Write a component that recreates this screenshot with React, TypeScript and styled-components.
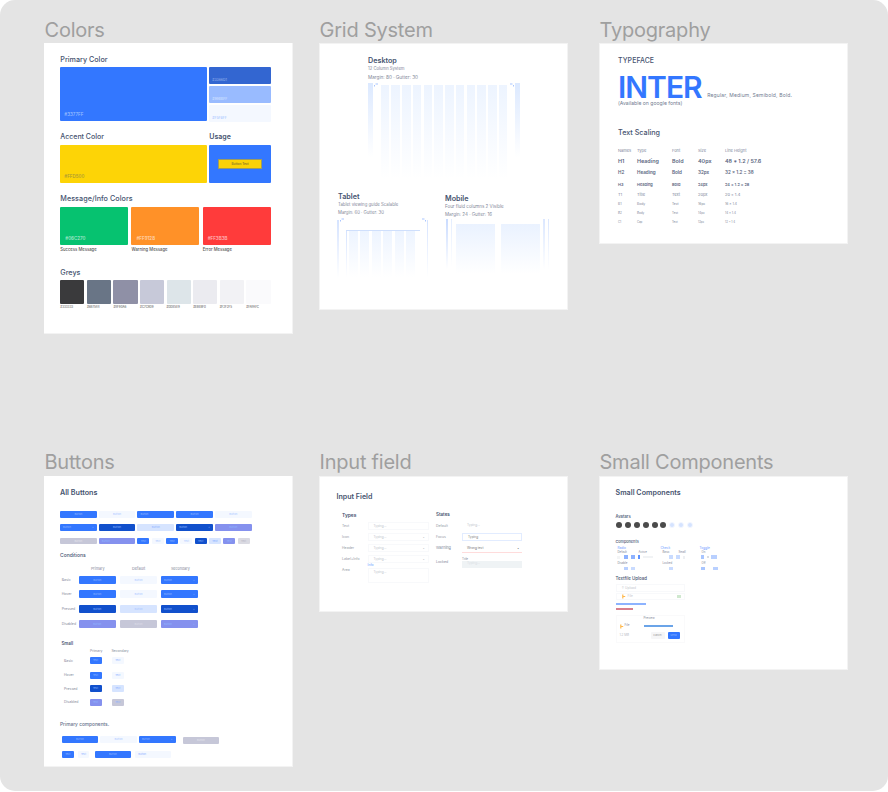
import React from "react";
import styled, { createGlobalStyle } from "styled-components";

const Global = createGlobalStyle`
  * { box-sizing: border-box; }
  html, body { margin: 0; background: #fff; }
  body { font-family: Inter, "Liberation Sans", sans-serif; }
`;

const ink = "#46536f";
const mute = "#7f8798";
const blue = "#3377ff";
const navy = "#1150cc";
const pale = "#f4f8ff";
const sky = "#d6e4ff";
const violet = "#8591ee";
const grey = "#c6c7d8";

const Canvas = styled.main`
  width: 888px;
  height: 791px;
  padding-left: 44px;
  border-radius: 15px;
  background: #e4e4e4;
  display: grid;
  grid-template-columns: 275px 280px 249px;
  grid-template-rows: 433px 358px;
  overflow: hidden;
`;

const Frame = styled.section`
  display: flex;
  flex-direction: column;
  align-items: flex-start;
`;

const FrameTitle = styled.h2<{ $pt?: number }>`
  margin: 0;
  height: 43px;
  padding: ${(p) => p.$pt ?? 17}px 0 0 0.5px;
  font-size: 20px;
  line-height: 26px;
  font-weight: 400;
  letter-spacing: -0.22px;
  color: #9f9f9f;
  white-space: nowrap;
`;

const Board = styled.div<{ $h: number; $pl: number; $flush?: boolean }>`
  width: 249px;
  height: ${(p) => p.$h}px;
  padding-left: ${(p) => p.$pl}px;
  background: #fff;
  box-shadow: inset ${(p) => (p.$flush ? "-1px -1px" : "0 0")} 0
    ${(p) => (p.$flush ? "0" : "1px")} #f3f3f3;
  display: flex;
  flex-direction: column;
  align-items: flex-start;
`;

const Text = styled.div<{
  $s?: number;
  $h?: number;
  $mt?: number;
  $c?: string;
  $w?: number;
  $ls?: number;
  $ml?: number;
}>`
  font-size: ${(p) => p.$s ?? 4}px;
  line-height: ${(p) => p.$h ?? 8}px;
  height: ${(p) => p.$h ?? 8}px;
  margin-top: ${(p) => p.$mt ?? 0}px;
  margin-left: ${(p) => p.$ml ?? 0}px;
  color: ${(p) => p.$c ?? mute};
  font-weight: ${(p) => p.$w ?? 400};
  letter-spacing: ${(p) => p.$ls ?? 0}px;
  white-space: nowrap;
`;

const Heading = styled(Text)`
  color: ${(p) => p.$c ?? ink};
  font-weight: ${(p) => p.$w ?? 600};
`;

const Row = styled.div<{ $gap?: number; $mt?: number; $ml?: number; $h?: number; $align?: string }>`
  display: flex;
  flex: none;
  gap: ${(p) => p.$gap ?? 0}px;
  margin-top: ${(p) => p.$mt ?? 0}px;
  margin-left: ${(p) => p.$ml ?? 0}px;
  height: ${(p) => (p.$h ? `${p.$h}px` : "auto")};
  align-items: ${(p) => p.$align ?? "flex-start"};
`;

const Col = styled.div<{ $gap?: number; $w?: number; $pt?: number }>`
  display: flex;
  flex: none;
  flex-direction: column;
  gap: ${(p) => p.$gap ?? 0}px;
  width: ${(p) => (p.$w ? `${p.$w}px` : "auto")};
  padding-top: ${(p) => p.$pt ?? 0}px;
`;

const TableRow = styled.div<{ $cols: string; $h: number; $mt?: number; $ml?: number }>`
  display: grid;
  flex: none;
  grid-template-columns: ${(p) => p.$cols};
  height: ${(p) => p.$h}px;
  margin-top: ${(p) => p.$mt ?? 0}px;
  margin-left: ${(p) => p.$ml ?? 0}px;
  align-items: center;
`;

const Swatch = styled.div<{ $w: number; $h: number; $bg: string; $c?: string; $pl?: number; $pb?: number }>`
  width: ${(p) => p.$w}px;
  height: ${(p) => p.$h}px;
  flex: none;
  border-radius: 1px;
  background: ${(p) => p.$bg};
  color: ${(p) => p.$c ?? "#ffffff99"};
  padding: 0 0 ${(p) => p.$pb ?? 4}px ${(p) => p.$pl ?? 4}px;
  display: flex;
  align-items: flex-end;
  font-size: ${(p) => (p.$pb ? 3.4 : 4.5)}px;
  font-weight: 500;
  line-height: 5px;
`;

const UsagePanel = styled.div`
  width: 61.5px;
  height: 38.5px;
  border-radius: 1px;
  background: ${blue};
  display: grid;
  place-items: center;
`;

const UsageButton = styled.div`
  width: 44px;
  height: 10.5px;
  border: 0.5px solid #9c9b60;
  background: #fbd208;
  color: #77682c;
  font-size: 3.2px;
  font-weight: 500;
  line-height: 8.5px;
  text-align: center;
`;

const Button = styled.div<{ $w?: number; $h?: number; $bg: string; $c?: string; $split?: boolean }>`
  width: ${(p) => p.$w ?? 36.7}px;
  height: ${(p) => p.$h ?? 7}px;
  flex: none;
  border-radius: 1px;
  background: ${(p) => p.$bg};
  color: ${(p) => p.$c ?? "#8fb6ff"};
  font-size: 2.6px;
  line-height: ${(p) => p.$h ?? 7}px;
  padding: 0 ${(p) => (p.$split ? 3 : 0)}px;
  display: flex;
  justify-content: ${(p) => (p.$split ? "space-between" : "center")};
  white-space: nowrap;
  overflow: hidden;
`;

const Fade = styled.div<{ $w: number; $h: number; $c?: string; $mt?: number }>`
  width: ${(p) => p.$w}px;
  height: ${(p) => p.$h}px;
  flex: none;
  margin-top: ${(p) => p.$mt ?? 0}px;
  background: linear-gradient(${(p) => p.$c ?? "#edf4ff"}, #ffffff);
`;

const TabletTop = styled.div`
  width: 74px;
  margin-top: 12px;
  border-top: 1px solid #cfdffc;
  display: flex;
  gap: 2.4px;
`;

const Field = styled.div<{ $w?: number; $h?: number; $line?: string; $bg?: string; $c?: string; $bare?: boolean }>`
  width: ${(p) => p.$w ?? 61}px;
  height: ${(p) => p.$h ?? 8}px;
  flex: none;
  border: ${(p) => (p.$bare ? 0 : 1)}px solid ${(p) => p.$line ?? "#f8f9fb"};
  background: ${(p) => p.$bg ?? "#fff"};
  color: ${(p) => p.$c ?? "#c3c7ce"};
  padding: 0 3px 0 5px;
  font-size: 3.2px;
  line-height: ${(p) => Math.min(p.$h ?? 8, 8) - 2}px;
  display: flex;
  justify-content: space-between;
`;

const ErrorField = styled(Field)`
  border: 0;
  border-bottom: 1.5px solid #ffdcdc;
`;

const Bar = styled.div<{ $w: number; $h: number; $bg: string; $mt?: number; $ml?: number }>`
  width: ${(p) => p.$w}px;
  height: ${(p) => p.$h}px;
  flex: none;
  margin-top: ${(p) => p.$mt ?? 0}px;
  margin-left: ${(p) => p.$ml ?? 0}px;
  background: ${(p) => p.$bg};
`;

const Avatar = styled.div<{ $light?: boolean }>`
  width: 6px;
  height: 6px;
  border-radius: 50%;
  background: ${(p) => (p.$light ? "#d5e3ff" : "#4b4b4b")};
  border: ${(p) => (p.$light ? "1.5px solid #f3f7ff" : "0")};
`;

const UploadCard = styled.div`
  width: 69px;
  height: 28px;
  flex: none;
  margin-top: 4.5px;
  border: 1px solid #fafafb;
  display: grid;
  grid-template-columns: 27px 1fr;
`;

const Corner = ({ flip }: { flip?: boolean }) => (
  <svg width="7" height="4" viewBox="0 0 7 4" fill="none">
    <path
      d={flip ? "M2 1h2.5M5.5 2v1.5" : "M5 1H2.5M1.5 2V3.5"}
      stroke="#a9c5ff"
      strokeWidth="1"
    />
  </svg>
);

const Flame = () => (
  <svg width="4" height="5" viewBox="0 0 4 5">
    <path d="M.8 .5v4M.8 2.5h2.4" stroke="#ffb84d" strokeWidth="1.2" fill="none" />
  </svg>
);

const GREYS: [string, string][] = [
  ["#3a3a3c", "#333333"],
  ["#697586", "#6B7588"],
  ["#8f90a6", "#8F90A6"],
  ["#c7c9d9", "#C7C9D9"],
  ["#dde5e9", "#DDE5E9"],
  ["#ebebf0", "#EBEBF0"],
  ["#f2f2f5", "#F2F2F5"],
  ["#fafafc", "#FAFAFC"],
];

const MESSAGES: [string, string, string][] = [
  ["#06c270", "#06C270", "Success Message"],
  ["#ff9128", "#FF9128", "Warning Message"],
  ["#ff3b3b", "#FF3B3B", "Error Message"],
];

const ColorsBoard = () => (
  <Board $h={291} $pl={16.3} $flush>
    <Heading $s={7.2} $mt={12.5} $w={500}>Primary Color</Heading>
    <Row $gap={2.5} $mt={3.5}>
      <Swatch $w={146.5} $h={54} $bg={blue} $c="#9fc0ff" $pl={4}>#3377FF</Swatch>
      <Col $gap={2}>
        <Swatch $w={61.5} $h={17} $bg="#3366d1" $c="#8fadea" $pl={3} $pb={1.5}>#3366D1</Swatch>
        <Swatch $w={61.5} $h={17} $bg="#99bbff" $c="#d3e2ff" $pl={3} $pb={1.5}>#99BBFF</Swatch>
        <Swatch $w={61.5} $h={17} $bg={pale} $c="#a9c6ff" $pl={3} $pb={1.5}>#F5F8FF</Swatch>
      </Col>
    </Row>
    <Row $mt={11}>
      <Col $w={149}><Heading $s={7} $w={500}>Accent Color</Heading></Col>
      <Heading $s={7}>Usage</Heading>
    </Row>
    <Row $gap={2.5} $mt={3.5}>
      <Swatch $w={146.5} $h={38.5} $bg="#fdd406" $c="#a89738">#FFD500</Swatch>
      <UsagePanel><UsageButton>Button Text</UsageButton></UsagePanel>
    </Row>
    <Heading $s={7.2} $mt={12} $w={500} $ls={0.05}>Message/Info Colors</Heading>
    <Row $gap={3.3} $mt={3.5}>
      {MESSAGES.map(([bg, hex, name]) => (
        <Col key={hex} $w={67.9}>
          <Swatch $w={67.9} $h={38.5} $bg={bg} $c="#ffffffaa" $pl={5}>{hex}</Swatch>
          <Text $s={4.2} $h={9.5} $w={500} $c="#555">{name}</Text>
        </Col>
      ))}
    </Row>
    <Heading $s={7.2} $mt={14} $w={500}>Greys</Heading>
    <Row $gap={2.4} $mt={3.5}>
      {GREYS.map(([bg, hex]) => (
        <Col key={hex} $w={24.2}>
          <Swatch $w={24.2} $h={24} $bg={bg} />
          <Text $s={2.9} $h={7} $w={500} $c="#666">{hex}</Text>
        </Col>
      ))}
    </Row>
  </Board>
);

const GridBoard = () => (
  <Board $h={267} $pl={18}>
    <Col $pt={14}>
      <Heading $s={7.2} $ml={31}>Desktop</Heading>
      <Text $s={4.2} $ml={31}>12 Column System</Text>
      <Text $s={4.7} $ml={31}>Margin: 80 · Gutter: 30</Text>
    </Col>
    <Row $mt={2} $ml={31} $gap={0.5} $h={110}>
      <Fade $w={4.7} $h={74} $c="#dce9ff" />
      <Corner />
      <Row $gap={2.25} $mt={2}>
        {Array.from({ length: 12 }, (_, i) => <Fade key={i} $w={8.5} $h={94} />)}
      </Row>
      <Corner flip />
      <Fade $w={4.7} $h={74} $c="#dce9ff" />
    </Row>
    <Row>
      <Col $w={108}>
        <Heading $s={7.2} $h={8} $ml={1}>Tablet</Heading>
        <Text $s={4.3} $ml={1}>Tablet viewing guide Scalable</Text>
        <Text $s={4.3} $ml={1}>Margin: 60 · Gutter: 30</Text>
        <Row $mt={1}>
          <Fade $w={1.5} $h={58} $c="#d5e3ff" $mt={2} />
          <Corner />
          <TabletTop>
            <Fade $w={1.2} $h={46} $c="#d5e3ff" />
            {Array.from({ length: 6 }, (_, i) => <Fade key={i} $w={9} $h={46} />)}
          </TabletTop>
          <Corner flip />
          <Fade $w={1.5} $h={58} $c="#d5e3ff" $mt={2} />
        </Row>
      </Col>
      <Col $pt={2}>
        <Heading $s={7.2} $h={8}>Mobile</Heading>
        <Text $s={4.5}>Four fluid columns 2 Visible</Text>
        <Text $s={4.5}>Margin: 24 · Gutter: 16</Text>
        <Row $h={54} $gap={3} $ml={1}>
          <Fade $w={1.5} $h={50} $c="#c9dbff" />
          <Fade $w={1.5} $h={48} $c="#e3edff" />
          <Row $gap={6} $ml={1}>
            <Fade $w={39} $h={50} $mt={5} $c="#eaf2ff" />
            <Fade $w={39} $h={50} $mt={5} $c="#eaf2ff" />
          </Row>
          <Fade $w={1.5} $h={50} $c="#dbe7ff" />
          <Fade $w={1.5} $h={50} $c="#dbe7ff" />
        </Row>
      </Col>
    </Row>
  </Board>
);

const TYPE_ROWS: { h: number; s: number; w: number; cells: string[] }[] = [
  { h: 9, s: 4, w: 400, cells: ["Names", "Type", "Font", "Size", "Line Height"] },
  { h: 11, s: 5.4, w: 600, cells: ["H1", "Heading", "Bold", "40px", "48 * 1.2 / 57.6"] },
  { h: 13, s: 4.6, w: 600, cells: ["H2", "Heading", "Bold", "32px", "32 x 1.2 = 38"] },
  { h: 10, s: 3.9, w: 600, cells: ["H3", "Heading", "Bold", "24px", "24 x 1.2 = 28"] },
  { h: 10, s: 4, w: 400, cells: ["T1", "Title", "Text", "20px", "20 x 1.4"] },
  { h: 9, s: 3.3, w: 400, cells: ["B1", "Body", "Text", "16px", "16 x 1.4"] },
  { h: 9, s: 3, w: 400, cells: ["B2", "Body", "Text", "14px", "14 x 1.4"] },
  { h: 9, s: 2.8, w: 400, cells: ["C1", "Cap", "Text", "12px", "12 x 1.4"] },
];

const TypographyBoard = () => (
  <Board $h={201} $pl={19}>
    <Heading $s={6.9} $mt={13.5} $w={500} $ls={0.1}>TYPEFACE</Heading>
    <Row $mt={9} $gap={5.5} $h={27} $align="center">
      <Heading $s={30} $h={27} $c={blue} $ls={-1}>INTER</Heading>
      <Text $s={5} $h={8} $mt={16} $c="#717b90" $ls={0.18}>Regular, Medium, Semibold, Bold.</Text>
    </Row>
    <Text $s={5.1} $h={5} $c="#717b90">(Available on google fonts)</Text>
    <Heading $s={7.2} $mt={23.5} $w={500}>Text Scaling</Heading>
    <Col $pt={9.5}>
      {TYPE_ROWS.map((r, i) => (
        <TableRow key={i} $cols="19px 35px 26px 27px auto" $h={r.h}>
          {r.cells.map((c, j) => (
            <Text key={j} $s={r.s} $w={r.w} $c={r.w > 400 ? "#5b6680" : "#7d8699"}>{c}</Text>
          ))}
        </TableRow>
      ))}
    </Col>
  </Board>
);

const MINI: [string, string?][] = [
  [blue], [pale, "#a9c6ff"], [blue], [pale, "#a9c6ff"],
  [navy], [sky, "#7ea9ff"], [violet], ["#dadae2", "#b5b5c2"],
];

const STATES: [string, string, string, string][] = [
  ["Basic", blue, pale, blue],
  ["Hover", blue, pale, blue],
  ["Pressed", navy, sky, navy],
  ["Disabled", violet, grey, violet],
];

const SMALL_ROWS: [string, string, string, number][] = [
  ["Basic", blue, pale, 14],
  ["Hover", blue, pale, 14.5],
  ["Pressed", navy, sky, 13],
  ["Disabled", violet, grey, 14],
];

const ButtonsBoard = () => (
  <Board $h={291} $pl={16} $flush>
    <Heading $s={7.2} $mt={12.5}>All Buttons</Heading>
    <Row $mt={14.5} $gap={2.05}>
      <Button $bg={blue}>Button</Button>
      <Button $bg={pale} $c="#a9c6ff">Button</Button>
      <Button $bg={blue} $split>Button</Button>
      <Button $bg={blue}>Button</Button>
      <Button $bg={pale} $c="#a9c6ff">Button</Button>
    </Row>
    <Row $mt={6} $gap={2.05}>
      <Button $bg={blue} $split><span>Button</span><span>+</span></Button>
      <Button $bg={navy}>Button</Button>
      <Button $bg={sky} $c="#8eb2ff">Button</Button>
      <Button $bg={navy} $split><span>Button</span><span>+</span></Button>
      <Button $bg={violet}>Button</Button>
    </Row>
    <Row $mt={6.5} $gap={2.05}>
      <Button $bg={grey} $c="#e4e4ed" $h={6.5}>Button</Button>
      <Button $bg={violet} $split $h={6.5}>Button</Button>
      <Row $gap={2.3}>
        {MINI.map(([bg, c], i) => <Button key={i} $w={12} $h={6.5} $bg={bg} $c={c}>Text</Button>)}
      </Row>
    </Row>
    <Heading $s={5} $mt={6.5} $w={500}>Conditions</Heading>
    <TableRow $cols="18px 41px 41px 37px" $h={8} $mt={6} $ml={1}>
      <span />
      <Text $s={3.7} $ml={12}>Primary</Text>
      <Text $s={3.9} $ml={12}>Default</Text>
      <Text $s={3.7} $ml={10}>Secondary</Text>
    </TableRow>
    <Col>
      {STATES.map(([name, a, b, c]) => (
        <TableRow key={name} $cols="17.3px 41.2px 40.8px 37px" $h={14.65} $ml={1.7}>
          <Text $s={3.5}>{name}</Text>
          <Button $bg={a} $h={8}>Button</Button>
          <Button $bg={b} $h={8} $c={b === grey ? "#dedee8" : "#a9c6ff"}>Button</Button>
          <Button $bg={c} $h={8} $split><span>Button</span><span>+</span></Button>
        </TableRow>
      ))}
    </Col>
    <Heading $s={4.4} $mt={9} $ml={1.5}>Small</Heading>
    <Row $ml={30} $mt={-1} $gap={9}>
      <Text $s={3.4}>Primary</Text>
      <Text $s={3.4}>Secondary</Text>
    </Row>
    <Row $mt={-1.3}>
      <Col>
        {SMALL_ROWS.map(([name, a, b, h]) => (
          <TableRow key={name} $cols="25.5px 22px 13px" $h={h} $ml={4}>
            <Text $s={3.5}>{name}</Text>
            <Button $w={12} $bg={a}>Text</Button>
            <Button $w={12.5} $bg={b} $c="#8eb2ff">Text</Button>
          </TableRow>
        ))}
      </Col>
    </Row>
    <Heading $s={4.8} $mt={10.3} $w={500} $c="#66718a">Primary components.</Heading>
    <Row $mt={8} $ml={1.5} $gap={2}>
      <Button $bg={blue}>Button</Button>
      <Button $bg={pale} $c="#a9c6ff">Button</Button>
      <Button $bg={blue} $split><span>Button</span><span>+</span></Button>
      <Row $ml={5} $mt={1}><Button $bg={grey} $c="#e4e4ed">Button</Button></Row>
    </Row>
    <Row $mt={7} $ml={1.5} $gap={4}>
      <Button $w={12.5} $bg={blue}>Text</Button>
      <Button $w={11} $bg={pale} $c="#8eb2ff">Text</Button>
      <Row $ml={1.5}><Button $bg={blue}>Button</Button></Row>
      <Button $w={36} $bg={pale} $c="#8eb2ff" $split>Button</Button>
    </Row>
  </Board>
);

const InputBoard = () => (
  <Board $h={136} $pl={17.5}>
    <Heading $s={7.1} $mt={17}>Input Field</Heading>
    <Row $mt={10} $ml={5.5}>
      <Col $w={94}>
        <Heading $s={4.9}>Types</Heading>
        {["Text", "Icon", "Header", "Label+Info"].map((name, i) => (
          <TableRow key={name} $cols="25.5px 61px" $h={11.1} $mt={i === 0 ? 1 : 0}>
            <Text $s={3.5} $c="#9398a3">{name}</Text>
            <Field><span>Typing...</span>{i > 0 && <span>•</span>}</Field>
          </TableRow>
        ))}
        <Row $h={11}>
          <Col $w={25.5} $pt={2}><Text $s={3.5} $c="#9398a3">Area</Text></Col>
          <Col>
            <Text $s={3.4} $h={3.5} $c="#6d9cff">Info</Text>
            <Field $h={15}><span>Typing...</span></Field>
          </Col>
        </Row>
      </Col>
      <Col>
        <Heading $s={4.5}>States</Heading>
        <TableRow $cols="26px 60px" $h={11} $mt={1}>
          <Text $s={3.5} $c="#9398a3">Default</Text>
          <Field $w={60} $bare>Typing...</Field>
        </TableRow>
        <TableRow $cols="26px 60px" $h={11}>
          <Text $s={3.5} $c="#9398a3">Focus</Text>
          <Field $w={60} $line="#e2ecff" $c="#888">Typing</Field>
        </TableRow>
        <TableRow $cols="26px 60px" $h={14}>
          <Text $s={3.8} $mt={-2}>Warning</Text>
          <ErrorField $w={60} $c="#777"><span>Wrong text</span><span>•</span></ErrorField>
        </TableRow>
        <TableRow $cols="26px 60px" $h={12}>
          <Text $s={3.5}>Locked</Text>
          <Col $pt={1}>
            <Text $s={3} $h={4}>Title</Text>
            <Field $w={60} $h={7} $bare $bg="#eff3f5" $c="#dbe1e5">Typing...</Field>
          </Col>
        </TableRow>
      </Col>
    </Row>
  </Board>
);

const SmallBoard = () => (
  <Board $h={194} $pl={16.5}>
    <Heading $s={7.1} $mt={12.5} $ls={0.05}>Small Components</Heading>
    <Heading $s={4.2} $mt={16.5} $w={500}>Avatars</Heading>
    <Row $mt={1} $gap={2.9} $ml={0.5}>
      {Array.from({ length: 9 }, (_, i) => <Avatar key={i} $light={i > 5} />)}
    </Row>
    <Heading $s={3.8} $mt={9.5} $w={500}>Components</Heading>
    <TableRow $cols="43px 39px 20px" $h={4} $ml={2}>
      <Text $s={3.2} $h={4} $c="#6d9cff">Radio</Text>
      <Text $s={3.2} $h={4} $c="#6d9cff">Check</Text>
      <Text $s={3.2} $h={4} $c="#6d9cff">Toggle</Text>
    </TableRow>
    <TableRow $cols="21px 24px 16px 23px 20px" $h={4} $ml={2}>
      {["Default", "Active", "Basic", "Small", "On"].map((t) => (
        <Text key={t} $s={2.8} $h={4}>{t}</Text>
      ))}
    </TableRow>
    <Row $h={7} $ml={1} $align="center" $gap={3}>
      <Bar $w={3} $h={3} $bg="#f4f5f6" />
      <Bar $w={4} $h={4} $bg="#8eb2ff" $ml={1} />
      <Bar $w={4} $h={4} $bg="#8eb2ff" />
      <Bar $w={2.5} $h={4} $bg="#5f93ff" />
      <Bar $w={10} $h={2} $bg="#f1f3f5" />
      <Bar $w={4} $h={4} $bg="#c9dbff" $ml={13} />
      <Bar $w={4} $h={4} $bg="#c9dbff" />
      <Bar $w={2} $h={3} $bg="#eef0f3" />
      <Bar $w={3} $h={4} $bg="#a9c6ff" $ml={13} />
      <Bar $w={2} $h={2} $bg="#dadde2" />
      <Bar $w={6} $h={4} $bg="#b9d0ff" $ml={-1} />
    </Row>
    <TableRow $cols="45px 39px 20px" $h={5} $ml={2}>
      <Text $s={2.8} $h={4}>Disable</Text>
      <Text $s={2.8} $h={4}>Locked</Text>
      <Text $s={2.8} $h={4}>Off</Text>
    </TableRow>
    <Row $h={6} $ml={8} $align="center" $gap={3}>
      <Bar $w={4} $h={3} $bg="#b9d0ff" />
      <Bar $w={4} $h={3} $bg="#c9dbff" />
      <Bar $w={4} $h={3} $bg="#c9dbff" $ml={31} />
      <Bar $w={4} $h={3} $bg="#a9c6ff" $ml={25} />
      <Bar $w={5} $h={3} $bg="#b9d0ff" $ml={5} />
    </Row>
    <Heading $s={4.4} $mt={3.5} $w={500}>Textfile Upload</Heading>
    <Bar $w={69} $h={1} $bg="#ffffff" />
    <Field $w={69} $h={8}><span>↑ Upload</span></Field>
    <Row $mt={1}>
      <Field $w={69} $h={7}>
        <Row $gap={2}><Flame /><span>File</span></Row>
        <Bar $w={4} $h={3} $bg="#cfe8cf" $mt={1} />
      </Field>
    </Row>
    <Bar $w={30} $h={2} $bg="#8db3ff" $mt={3} />
    <Bar $w={17} $h={2} $bg="#d87f8d" $mt={3} />
    <UploadCard>
      <Col $pt={8}>
        <Row $gap={1} $ml={3}><Flame /><Text $s={3} $h={4} $mt={-1}>File</Text></Row>
        <Text $s={3} $h={4} $mt={4} $ml={3} $c="#b5bac3">1.2 MB</Text>
      </Col>
      <Col>
        <Text $s={3} $h={5}>Preview</Text>
        <Bar $w={29.5} $h={2} $bg="#6ba4e8" $mt={4} />
        <Row $mt={5} $ml={7} $gap={3}>
          <Button $w={14} $h={7} $bg="#f6f6f7" $c="#999">Cancel</Button>
          <Button $w={12} $h={7} $bg={blue}>Send</Button>
        </Row>
      </Col>
    </UploadCard>
  </Board>
);

export default function App() {
  return (
    <>
      <Global />
      <Canvas>
        <Frame><FrameTitle>Colors</FrameTitle><ColorsBoard /></Frame>
        <Frame><FrameTitle>Grid System</FrameTitle><GridBoard /></Frame>
        <Frame><FrameTitle>Typography</FrameTitle><TypographyBoard /></Frame>
        <Frame><FrameTitle $pt={15.5}>Buttons</FrameTitle><ButtonsBoard /></Frame>
        <Frame><FrameTitle $pt={15.5}>Input field</FrameTitle><InputBoard /></Frame>
        <Frame><FrameTitle $pt={15.5}>Small Components</FrameTitle><SmallBoard /></Frame>
      </Canvas>
    </>
  );
}
